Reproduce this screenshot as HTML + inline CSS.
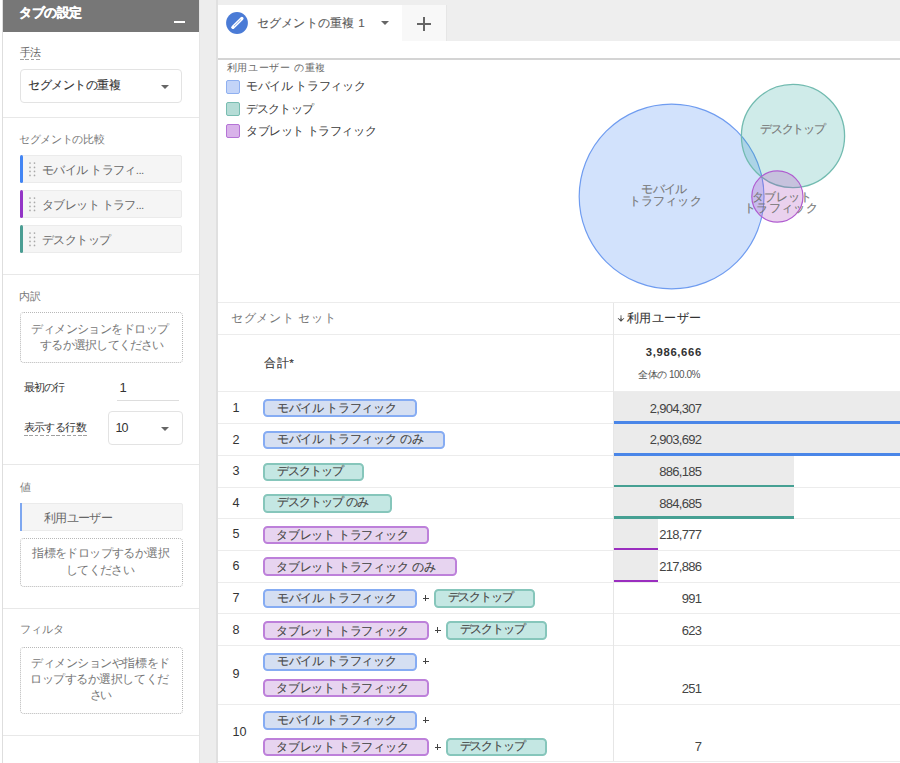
<!DOCTYPE html>
<html lang="ja"><head><meta charset="utf-8"><style>
html,body{margin:0;padding:0;width:900px;height:763px;overflow:hidden;background:#fff}
body{position:relative;font-family:"Liberation Sans",sans-serif}
body>div,body>svg{position:absolute}
.sk{-webkit-text-stroke:0.12px currentColor}
.sk2{-webkit-text-stroke:0.3px currentColor}
</style></head><body>
<div style="left:0px;top:0px;width:199px;height:763px;background:#fff"></div>
<div style="left:2px;top:0px;width:1px;height:763px;background:#dedede"></div>
<div style="left:3px;top:0px;width:196px;height:32px;background:#777"></div>
<div id="t1" class="tx sk2" style="left:19.00px;top:3.25px;font-size:13.00px;line-height:20px;color:#fff;font-weight:bold;letter-spacing:-0.500px;white-space:nowrap;">タブの設定</div>
<div style="left:174px;top:20.5px;width:11px;height:2px;background:#fff"></div>
<div id="t2" class="tx" style="left:20.30px;top:41.85px;font-size:10.80px;line-height:20px;color:#666;font-weight:normal;letter-spacing:-1.280px;white-space:nowrap;">手法</div>
<div style="left:20px;top:58.7px;width:21.5px;height:1.6px;background:repeating-linear-gradient(90deg,#a0a0a0 0 3.6px,transparent 3.6px 5.4px)"></div>
<div style="left:20px;top:69px;width:162px;height:34px;border:1px solid #e3e3e3;border-radius:4px;box-sizing:border-box;background:#fff"></div>
<div id="t3" class="tx sk" style="left:28.30px;top:75.45px;font-size:11.60px;line-height:20px;color:#333;font-weight:normal;letter-spacing:-0.492px;white-space:nowrap;">セグメントの重複</div>
<svg style="left:161px;top:85px" width="8" height="4"><path d="M0 0 L8 0 L4 4 Z" fill="#666"/></svg>
<div style="left:3px;top:117px;width:196px;height:1px;background:#e8e8e8"></div>
<div id="t4" class="tx" style="left:19.10px;top:129.05px;font-size:10.80px;line-height:20px;color:#777;font-weight:normal;letter-spacing:-0.352px;white-space:nowrap;">セグメントの比較</div>
<div style="left:20px;top:155px;width:162px;height:28px;background:#f5f5f5;border:1px solid #ebebeb;box-sizing:border-box;border-radius:2px"></div>
<div style="left:20px;top:155px;width:2.5px;height:28px;background:#4285f4;border-radius:2px"></div>
<svg style="left:26px;top:159px" width="13" height="21"><circle cx="4" cy="4.1" r="0.85" fill="#a9a9a9"/><circle cx="4" cy="8.4" r="0.85" fill="#a9a9a9"/><circle cx="4" cy="12.4" r="0.85" fill="#a9a9a9"/><circle cx="4" cy="16.4" r="0.85" fill="#a9a9a9"/><circle cx="8.5" cy="4.1" r="0.85" fill="#a9a9a9"/><circle cx="8.5" cy="8.4" r="0.85" fill="#a9a9a9"/><circle cx="8.5" cy="12.4" r="0.85" fill="#a9a9a9"/><circle cx="8.5" cy="16.4" r="0.85" fill="#a9a9a9"/></svg>
<div id="t5" class="tx" style="left:41.90px;top:160.40px;font-size:11.60px;line-height:20px;color:#666;font-weight:normal;letter-spacing:-0.585px;white-space:nowrap;">モバイル トラフィ...</div>
<div style="left:20px;top:190px;width:162px;height:28px;background:#f5f5f5;border:1px solid #ebebeb;box-sizing:border-box;border-radius:2px"></div>
<div style="left:20px;top:190px;width:2.5px;height:28px;background:#9334c6;border-radius:2px"></div>
<svg style="left:26px;top:194px" width="13" height="21"><circle cx="4" cy="4.1" r="0.85" fill="#a9a9a9"/><circle cx="4" cy="8.4" r="0.85" fill="#a9a9a9"/><circle cx="4" cy="12.4" r="0.85" fill="#a9a9a9"/><circle cx="4" cy="16.4" r="0.85" fill="#a9a9a9"/><circle cx="8.5" cy="4.1" r="0.85" fill="#a9a9a9"/><circle cx="8.5" cy="8.4" r="0.85" fill="#a9a9a9"/><circle cx="8.5" cy="12.4" r="0.85" fill="#a9a9a9"/><circle cx="8.5" cy="16.4" r="0.85" fill="#a9a9a9"/></svg>
<div id="t6" class="tx" style="left:41.90px;top:195.35px;font-size:11.60px;line-height:20px;color:#666;font-weight:normal;letter-spacing:-0.585px;white-space:nowrap;">タブレット トラフ...</div>
<div style="left:20px;top:225px;width:162px;height:28px;background:#f5f5f5;border:1px solid #ebebeb;box-sizing:border-box;border-radius:2px"></div>
<div style="left:20px;top:225px;width:2.5px;height:28px;background:#4a9d93;border-radius:2px"></div>
<svg style="left:26px;top:229px" width="13" height="21"><circle cx="4" cy="4.1" r="0.85" fill="#a9a9a9"/><circle cx="4" cy="8.4" r="0.85" fill="#a9a9a9"/><circle cx="4" cy="12.4" r="0.85" fill="#a9a9a9"/><circle cx="4" cy="16.4" r="0.85" fill="#a9a9a9"/><circle cx="8.5" cy="4.1" r="0.85" fill="#a9a9a9"/><circle cx="8.5" cy="8.4" r="0.85" fill="#a9a9a9"/><circle cx="8.5" cy="12.4" r="0.85" fill="#a9a9a9"/><circle cx="8.5" cy="16.4" r="0.85" fill="#a9a9a9"/></svg>
<div id="t7" class="tx" style="left:41.90px;top:229.85px;font-size:11.60px;line-height:20px;color:#666;font-weight:normal;letter-spacing:-0.572px;white-space:nowrap;">デスクトップ</div>
<div style="left:3px;top:273.5px;width:196px;height:1px;background:#e8e8e8"></div>
<div id="t8" class="tx" style="left:19.10px;top:285.95px;font-size:10.80px;line-height:20px;color:#777;font-weight:normal;letter-spacing:-0.260px;white-space:nowrap;">内訳</div>
<div style="left:20px;top:312px;width:163px;height:51px;border:1px dotted #b8b8b8;border-radius:4px;box-sizing:border-box"></div>
<div id="t9" class="tx" style="left:-50.10px;width:300px;text-align:center;top:319.10px;font-size:11.50px;line-height:20px;color:#777;font-weight:normal;letter-spacing:-0.534px;white-space:nowrap;">ディメンションをドロップ</div>
<div id="t10" class="tx" style="left:-48.05px;width:300px;text-align:center;top:335.10px;font-size:11.50px;line-height:20px;color:#777;font-weight:normal;letter-spacing:-0.769px;white-space:nowrap;">するか選択してください</div>
<div id="t11" class="tx" style="left:23.50px;top:377.30px;font-size:10.80px;line-height:20px;color:#333;font-weight:normal;letter-spacing:-0.672px;white-space:nowrap;">最初の行</div>
<div id="t12" class="tx" style="left:119.60px;top:377.95px;font-size:13.00px;line-height:20px;color:#333;font-weight:normal;letter-spacing:0.000px;white-space:nowrap;">1</div>
<div style="left:117px;top:400px;width:62px;height:1px;background:#ddd"></div>
<div id="t13" class="tx" style="left:23.50px;top:417.40px;font-size:10.80px;line-height:20px;color:#333;font-weight:normal;letter-spacing:-0.587px;white-space:nowrap;">表示する行数</div>
<div style="left:23.5px;top:434.6px;width:63.5px;height:1.6px;background:repeating-linear-gradient(90deg,#a0a0a0 0 3.6px,transparent 3.6px 5.4px)"></div>
<div style="left:107.5px;top:410.5px;width:75px;height:34.5px;border:1px solid #e3e3e3;border-radius:4px;box-sizing:border-box"></div>
<div id="t14" class="tx" style="left:115.50px;top:418.00px;font-size:12.50px;line-height:20px;color:#333;font-weight:normal;letter-spacing:-0.900px;white-space:nowrap;">10</div>
<svg style="left:161px;top:427px" width="8" height="4"><path d="M0 0 L8 0 L4 4 Z" fill="#666"/></svg>
<div style="left:3px;top:464px;width:196px;height:1px;background:#e8e8e8"></div>
<div id="t15" class="tx" style="left:20.10px;top:476.85px;font-size:10.80px;line-height:20px;color:#777;font-weight:normal;letter-spacing:0.000px;white-space:nowrap;">値</div>
<div style="left:20px;top:503px;width:163px;height:28px;background:#f5f5f5;border:1px solid #ebebeb;box-sizing:border-box;border-radius:2px"></div>
<div style="left:20px;top:503px;width:1.5px;height:28px;background:#7ea7f0"></div>
<div id="t16" class="tx" style="left:43.90px;top:507.60px;font-size:11.50px;line-height:20px;color:#666;font-weight:normal;letter-spacing:-0.637px;white-space:nowrap;">利用ユーザー</div>
<div style="left:20px;top:537.5px;width:163px;height:49.5px;border:1px dotted #b8b8b8;border-radius:4px;box-sizing:border-box"></div>
<div id="t17" class="tx" style="left:-49.45px;width:300px;text-align:center;top:543.15px;font-size:11.50px;line-height:20px;color:#777;font-weight:normal;letter-spacing:-0.592px;white-space:nowrap;">指標をドロップするか選択</div>
<div id="t18" class="tx" style="left:-49.85px;width:300px;text-align:center;top:559.80px;font-size:11.50px;line-height:20px;color:#777;font-weight:normal;letter-spacing:-0.663px;white-space:nowrap;">してください</div>
<div style="left:3px;top:608px;width:196px;height:1px;background:#e8e8e8"></div>
<div id="t19" class="tx" style="left:19.90px;top:618.70px;font-size:10.80px;line-height:20px;color:#777;font-weight:normal;letter-spacing:-0.038px;white-space:nowrap;">フィルタ</div>
<div style="left:20px;top:646.5px;width:163px;height:67px;border:1px dotted #b8b8b8;border-radius:4px;box-sizing:border-box"></div>
<div id="t20" class="tx" style="left:-49.60px;width:300px;text-align:center;top:652.80px;font-size:11.50px;line-height:20px;color:#777;font-weight:normal;letter-spacing:-0.455px;white-space:nowrap;">ディメンションや指標をド</div>
<div id="t21" class="tx" style="left:-50.60px;width:300px;text-align:center;top:668.90px;font-size:11.50px;line-height:20px;color:#777;font-weight:normal;letter-spacing:-0.455px;white-space:nowrap;">ロップするか選択してくだ</div>
<div id="t22" class="tx" style="left:-49.95px;width:300px;text-align:center;top:685.10px;font-size:11.50px;line-height:20px;color:#777;font-weight:normal;letter-spacing:-1.880px;white-space:nowrap;">さい</div>
<div style="left:3px;top:734.5px;width:196px;height:1px;background:#e8e8e8"></div>
<div style="left:199px;top:0px;width:17px;height:763px;background:#ededed"></div>
<div style="left:199px;top:0px;width:1px;height:763px;background:#e5e5e5"></div>
<div style="left:216px;top:0px;width:2px;height:763px;background:#e0e0e0"></div>
<div style="left:218px;top:0px;width:682px;height:763px;background:#fff"></div>
<div style="left:218px;top:0px;width:682px;height:41px;background:#eeeeee"></div>
<div style="left:218px;top:5px;width:184px;height:36px;background:#fff"></div>
<div style="left:402px;top:5px;width:44px;height:36px;background:#f8f8f8"></div>
<div style="left:446px;top:5px;width:1px;height:36px;background:#e6e6e6"></div>
<svg style="left:226px;top:11.5px" width="22" height="22"><circle cx="11" cy="11" r="10.9" fill="#4a7bd6"/><path d="M7 15.2 L15.9 6.5" stroke="#fff" stroke-width="3.3" stroke-linecap="round"/><path d="M8 14.2 L14.8 7.6" stroke="#7fa3e8" stroke-width="0.9"/><path d="M5.8 16.4 L7 15.2" stroke="#fff" stroke-width="2"/></svg>
<div id="t23" class="tx sk" style="left:256.50px;top:12.50px;font-size:11.60px;line-height:20px;color:#5a5a5a;font-weight:normal;letter-spacing:0.279px;white-space:nowrap;">セグメントの重複 1</div>
<svg style="left:381px;top:21px" width="8" height="4"><path d="M0 0 L8 0 L4 4 Z" fill="#666"/></svg>
<div style="left:417px;top:23.25px;width:14px;height:1.5px;background:#666"></div>
<div style="left:423.25px;top:17px;width:1.5px;height:14px;background:#666"></div>
<div style="left:218px;top:58px;width:682px;height:2px;background:#d4d4d4"></div>
<div id="t24" class="tx" style="left:226.80px;top:58.00px;font-size:10.20px;line-height:20px;color:#666;font-weight:normal;letter-spacing:0.641px;white-space:nowrap;">利用ユーザー の重複</div>
<div style="left:226px;top:80px;width:14px;height:14px;background:#c3d4f8;border:1.5px solid #8fb0f0;border-radius:2px;box-sizing:border-box"></div>
<div id="t25" class="tx" style="left:246.00px;top:76.00px;font-size:12.00px;line-height:20px;color:#3a3a3a;font-weight:normal;letter-spacing:-0.369px;white-space:nowrap;">モバイル トラフィック</div>
<div style="left:226px;top:102px;width:14px;height:14px;background:#b5dcd6;border:1.5px solid #79bdb1;border-radius:2px;box-sizing:border-box"></div>
<div id="t26" class="tx" style="left:246.00px;top:98.50px;font-size:12.00px;line-height:20px;color:#3a3a3a;font-weight:normal;letter-spacing:-0.865px;white-space:nowrap;">デスクトップ</div>
<div style="left:226px;top:124px;width:14px;height:14px;background:#d9b3ea;border:1.5px solid #b574d6;border-radius:2px;box-sizing:border-box"></div>
<div id="t27" class="tx" style="left:246.00px;top:120.50px;font-size:12.00px;line-height:20px;color:#3a3a3a;font-weight:normal;letter-spacing:-0.430px;white-space:nowrap;">タブレット トラフィック</div>
<svg style="left:0;top:0" width="900" height="763">
<circle cx="671.6" cy="196.5" r="92.4" fill="#4285f4" fill-opacity="0.24" stroke="#6f9cf0" stroke-width="1.2"/>
<circle cx="793" cy="136" r="51.6" fill="#26a69a" fill-opacity="0.22" stroke="#72bbb0" stroke-width="1.3"/>
<circle cx="777.4" cy="196.5" r="25.6" fill="#ab47bc" fill-opacity="0.25" stroke="#b05cd0" stroke-width="1.2"/>
</svg>
<div id="t28" class="tx sk" style="left:514.00px;width:300px;text-align:center;top:183.45px;font-size:12.00px;line-height:12px;color:#777;font-weight:normal;letter-spacing:-0.534px;white-space:nowrap;">モバイル</div>
<div id="t29" class="tx sk" style="left:515.20px;width:300px;text-align:center;top:194.90px;font-size:12.00px;line-height:12px;color:#777;font-weight:normal;letter-spacing:0.181px;white-space:nowrap;">トラフィック</div>
<div id="t30" class="tx sk" style="left:642.50px;width:300px;text-align:center;top:123.00px;font-size:12.00px;line-height:12px;color:#777;font-weight:normal;letter-spacing:-1.163px;white-space:nowrap;">デスクトップ</div>
<div id="t31" class="tx sk" style="left:631.90px;width:300px;text-align:center;top:190.90px;font-size:12.00px;line-height:12px;color:#777;font-weight:normal;letter-spacing:-0.160px;white-space:nowrap;">タブレット</div>
<div id="t32" class="tx sk" style="left:631.00px;width:300px;text-align:center;top:202.10px;font-size:12.00px;line-height:12px;color:#777;font-weight:normal;letter-spacing:0.274px;white-space:nowrap;">トラフィック</div>
<div style="left:218px;top:302.2px;width:682px;height:1px;background:#ececec"></div>
<div style="left:218px;top:333.9px;width:682px;height:1px;background:#ececec"></div>
<div style="left:218px;top:391.2px;width:682px;height:1px;background:#ececec"></div>
<div style="left:218px;top:423.1px;width:682px;height:1px;background:#ececec"></div>
<div style="left:218px;top:455px;width:682px;height:1px;background:#ececec"></div>
<div style="left:218px;top:486.8px;width:682px;height:1px;background:#ececec"></div>
<div style="left:218px;top:518.3px;width:682px;height:1px;background:#ececec"></div>
<div style="left:218px;top:549.7px;width:682px;height:1px;background:#ececec"></div>
<div style="left:218px;top:581.6px;width:682px;height:1px;background:#ececec"></div>
<div style="left:218px;top:613.4px;width:682px;height:1px;background:#ececec"></div>
<div style="left:218px;top:645.2px;width:682px;height:1px;background:#ececec"></div>
<div style="left:218px;top:704px;width:682px;height:1px;background:#ececec"></div>
<div style="left:218px;top:760.5px;width:682px;height:1px;background:#ececec"></div>
<div style="left:612.5px;top:303px;width:1px;height:458px;background:#e6e6e6"></div>
<div id="t33" class="tx" style="left:231.10px;top:307.50px;font-size:11.60px;line-height:20px;color:#777;font-weight:normal;letter-spacing:0.661px;white-space:nowrap;">セグメント セット</div>
<svg style="left:617px;top:314.5px" width="8" height="8"><path d="M4 0.3 V4.5" stroke="#888" stroke-width="1.3"/><path d="M0.6 3.2 L4 6.8 L7.4 3.2 L6.4 3.2 L4 5.4 L1.6 3.2 Z" fill="#333"/><path d="M4 3.5 V6" stroke="#444" stroke-width="1.3"/></svg>
<div id="t34" class="tx sk" style="left:627.10px;top:308.40px;font-size:11.60px;line-height:20px;color:#333;font-weight:normal;letter-spacing:0.396px;white-space:nowrap;">利用ユーザー</div>
<div id="t35" class="tx sk" style="left:264.10px;top:352.55px;font-size:11.80px;line-height:20px;color:#333;font-weight:normal;letter-spacing:0.544px;white-space:nowrap;">合計*</div>
<div id="t36" class="tx" style="right:198.10px;text-align:right;top:342.00px;font-size:11.30px;line-height:20px;color:#333;font-weight:bold;letter-spacing:0.645px;white-space:nowrap;">3,986,666</div>
<div id="t37" class="tx" style="right:200.10px;text-align:right;top:364.50px;font-size:10.00px;line-height:20px;color:#555;font-weight:normal;letter-spacing:-0.500px;white-space:nowrap;">全体の 100.0%</div>
<div style="left:614px;top:392.2px;width:286px;height:30.900000000000034px;background:#ebebeb"></div>
<div style="left:614px;top:421.1px;width:286px;height:2.5px;background:#4a86e8"></div>
<div id="rn0" class="tx" style="left:232.50px;top:397.60px;font-size:12.60px;line-height:20px;color:#333;font-weight:normal;letter-spacing:0.000px;white-space:nowrap;">1</div>
<div style="left:263px;top:398.9px;width:154px;height:18.5px;background:#d5dff2;border:2px solid #86acf3;border-radius:4.5px;box-sizing:border-box"></div>
<div id="pm_0_0_263" class="tx sk" style="left:277.00px;top:397.55px;font-size:11.60px;line-height:20px;color:#444;font-weight:normal;letter-spacing:-0.371px;white-space:nowrap;">モバイル トラフィック</div>
<div id="val0" class="tx" style="right:198.80px;text-align:right;top:398.55px;font-size:13.00px;line-height:20px;color:#444;font-weight:normal;letter-spacing:-0.709px;white-space:nowrap;">2,904,307</div>
<div style="left:614px;top:424.1px;width:286px;height:30.899999999999977px;background:#ebebeb"></div>
<div style="left:614px;top:453px;width:286px;height:2.5px;background:#4a86e8"></div>
<div id="rn1" class="tx" style="left:232.50px;top:429.50px;font-size:12.60px;line-height:20px;color:#333;font-weight:normal;letter-spacing:0.000px;white-space:nowrap;">2</div>
<div style="left:263px;top:430.8px;width:182px;height:18.5px;background:#d5dff2;border:2px solid #86acf3;border-radius:4.5px;box-sizing:border-box"></div>
<div id="pm2_1_0_263" class="tx sk" style="left:277.00px;top:429.45px;font-size:11.60px;line-height:20px;color:#444;font-weight:normal;letter-spacing:-0.371px;white-space:nowrap;">モバイル トラフィック<span style="margin-left:4px">のみ</span></div>
<div id="val1" class="tx" style="right:198.80px;text-align:right;top:430.45px;font-size:13.00px;line-height:20px;color:#444;font-weight:normal;letter-spacing:-0.709px;white-space:nowrap;">2,903,692</div>
<div style="left:614px;top:456px;width:180px;height:30.80000000000001px;background:#ebebeb"></div>
<div style="left:614px;top:484.8px;width:180px;height:2.5px;background:#46a093"></div>
<div id="rn2" class="tx" style="left:232.50px;top:461.35px;font-size:12.60px;line-height:20px;color:#333;font-weight:normal;letter-spacing:0.000px;white-space:nowrap;">3</div>
<div style="left:263px;top:462.65px;width:101px;height:18.5px;background:#c4e7e3;border:2px solid #86c6bb;border-radius:4.5px;box-sizing:border-box"></div>
<div id="pd_2_0_263" class="tx sk" style="left:277.00px;top:460.65px;font-size:11.60px;line-height:20px;color:#444;font-weight:normal;letter-spacing:-1.100px;white-space:nowrap;">デスクトップ</div>
<div id="val2" class="tx" style="right:198.80px;text-align:right;top:462.30px;font-size:13.00px;line-height:20px;color:#444;font-weight:normal;letter-spacing:-0.709px;white-space:nowrap;">886,185</div>
<div style="left:614px;top:487.8px;width:180px;height:30.499999999999943px;background:#ebebeb"></div>
<div style="left:614px;top:516.3px;width:180px;height:2.5px;background:#46a093"></div>
<div id="rn3" class="tx" style="left:232.50px;top:493.00px;font-size:12.60px;line-height:20px;color:#333;font-weight:normal;letter-spacing:0.000px;white-space:nowrap;">4</div>
<div style="left:263px;top:494.29999999999995px;width:129px;height:18.5px;background:#c4e7e3;border:2px solid #86c6bb;border-radius:4.5px;box-sizing:border-box"></div>
<div id="pd2_3_0_263" class="tx sk" style="left:277.00px;top:492.30px;font-size:11.60px;line-height:20px;color:#444;font-weight:normal;letter-spacing:-1.100px;white-space:nowrap;">デスクトップ<span style="margin-left:4px">のみ</span></div>
<div id="val3" class="tx" style="right:198.80px;text-align:right;top:493.95px;font-size:13.00px;line-height:20px;color:#444;font-weight:normal;letter-spacing:-0.709px;white-space:nowrap;">884,685</div>
<div style="left:614px;top:519.3px;width:44px;height:30.40000000000009px;background:#ebebeb"></div>
<div style="left:614px;top:547.7px;width:44px;height:2.5px;background:#9a2ebf"></div>
<div id="rn4" class="tx" style="left:232.50px;top:524.45px;font-size:12.60px;line-height:20px;color:#333;font-weight:normal;letter-spacing:0.000px;white-space:nowrap;">5</div>
<div style="left:263px;top:525.75px;width:166px;height:18.5px;background:#e7d4f0;border:2px solid #bd80da;border-radius:4.5px;box-sizing:border-box"></div>
<div id="pt_4_0_263" class="tx sk" style="left:276.00px;top:525.25px;font-size:11.60px;line-height:20px;color:#444;font-weight:normal;letter-spacing:-0.237px;white-space:nowrap;">タブレット トラフィック</div>
<div id="val4" class="tx" style="right:198.80px;text-align:right;top:525.40px;font-size:13.00px;line-height:20px;color:#444;font-weight:normal;letter-spacing:-0.709px;white-space:nowrap;">218,777</div>
<div style="left:614px;top:550.7px;width:44px;height:30.899999999999977px;background:#ebebeb"></div>
<div style="left:614px;top:579.6px;width:44px;height:2.5px;background:#9a2ebf"></div>
<div id="rn5" class="tx" style="left:232.50px;top:556.10px;font-size:12.60px;line-height:20px;color:#333;font-weight:normal;letter-spacing:0.000px;white-space:nowrap;">6</div>
<div style="left:263px;top:557.4000000000001px;width:194px;height:18.5px;background:#e7d4f0;border:2px solid #bd80da;border-radius:4.5px;box-sizing:border-box"></div>
<div id="pt2_5_0_263" class="tx sk" style="left:276.00px;top:556.90px;font-size:11.60px;line-height:20px;color:#444;font-weight:normal;letter-spacing:-0.237px;white-space:nowrap;">タブレット トラフィック<span style="margin-left:4px">のみ</span></div>
<div id="val5" class="tx" style="right:198.80px;text-align:right;top:557.05px;font-size:13.00px;line-height:20px;color:#444;font-weight:normal;letter-spacing:-0.709px;white-space:nowrap;">217,886</div>
<div id="rn6" class="tx" style="left:232.50px;top:587.95px;font-size:12.60px;line-height:20px;color:#333;font-weight:normal;letter-spacing:0.000px;white-space:nowrap;">7</div>
<div style="left:263px;top:589.25px;width:154px;height:18.5px;background:#d5dff2;border:2px solid #86acf3;border-radius:4.5px;box-sizing:border-box"></div>
<div id="pm_6_0_263" class="tx sk" style="left:277.00px;top:587.90px;font-size:11.60px;line-height:20px;color:#444;font-weight:normal;letter-spacing:-0.371px;white-space:nowrap;">モバイル トラフィック</div>
<div style="left:422.5px;top:597.9px;width:6px;height:1.2px;background:#444"></div>
<div style="left:424.9px;top:595.4px;width:1.2px;height:6px;background:#444"></div>
<div style="left:433.5px;top:589.25px;width:101px;height:18.5px;background:#c4e7e3;border:2px solid #86c6bb;border-radius:4.5px;box-sizing:border-box"></div>
<div id="pd_6_0_433" class="tx sk" style="left:447.50px;top:587.25px;font-size:11.60px;line-height:20px;color:#444;font-weight:normal;letter-spacing:-1.100px;white-space:nowrap;">デスクトップ</div>
<div id="val6" class="tx" style="right:198.80px;text-align:right;top:588.90px;font-size:13.00px;line-height:20px;color:#444;font-weight:normal;letter-spacing:-0.709px;white-space:nowrap;">991</div>
<div id="rn7" class="tx" style="left:232.50px;top:619.75px;font-size:12.60px;line-height:20px;color:#333;font-weight:normal;letter-spacing:0.000px;white-space:nowrap;">8</div>
<div style="left:263px;top:621.05px;width:166px;height:18.5px;background:#e7d4f0;border:2px solid #bd80da;border-radius:4.5px;box-sizing:border-box"></div>
<div id="pt_7_0_263" class="tx sk" style="left:276.00px;top:620.55px;font-size:11.60px;line-height:20px;color:#444;font-weight:normal;letter-spacing:-0.237px;white-space:nowrap;">タブレット トラフィック</div>
<div style="left:434.5px;top:629.9px;width:6px;height:1.2px;background:#444"></div>
<div style="left:436.9px;top:627.4px;width:1.2px;height:6px;background:#444"></div>
<div style="left:445.5px;top:621.05px;width:101px;height:18.5px;background:#c4e7e3;border:2px solid #86c6bb;border-radius:4.5px;box-sizing:border-box"></div>
<div id="pd_7_0_445" class="tx sk" style="left:459.50px;top:619.05px;font-size:11.60px;line-height:20px;color:#444;font-weight:normal;letter-spacing:-1.100px;white-space:nowrap;">デスクトップ</div>
<div id="val7" class="tx" style="right:198.80px;text-align:right;top:620.70px;font-size:13.00px;line-height:20px;color:#444;font-weight:normal;letter-spacing:-0.709px;white-space:nowrap;">623</div>
<div id="rn8" class="tx" style="left:232.50px;top:664.05px;font-size:12.60px;line-height:20px;color:#333;font-weight:normal;letter-spacing:0.000px;white-space:nowrap;">9</div>
<div style="left:263px;top:652.6500000000001px;width:154px;height:18.5px;background:#d5dff2;border:2px solid #86acf3;border-radius:4.5px;box-sizing:border-box"></div>
<div id="pm_8_0_263" class="tx sk" style="left:277.00px;top:651.30px;font-size:11.60px;line-height:20px;color:#444;font-weight:normal;letter-spacing:-0.371px;white-space:nowrap;">モバイル トラフィック</div>
<div style="left:422.5px;top:660.9px;width:6px;height:1.2px;background:#444"></div>
<div style="left:424.9px;top:658.4px;width:1.2px;height:6px;background:#444"></div>
<div style="left:263px;top:678.95px;width:166px;height:18.5px;background:#e7d4f0;border:2px solid #bd80da;border-radius:4.5px;box-sizing:border-box"></div>
<div id="pt_8_1_263" class="tx sk" style="left:276.00px;top:678.45px;font-size:11.60px;line-height:20px;color:#444;font-weight:normal;letter-spacing:-0.237px;white-space:nowrap;">タブレット トラフィック</div>
<div id="val8" class="tx" style="right:198.80px;text-align:right;top:678.60px;font-size:13.00px;line-height:20px;color:#444;font-weight:normal;letter-spacing:-0.709px;white-space:nowrap;">251</div>
<div id="rn9" class="tx" style="left:232.50px;top:721.70px;font-size:12.60px;line-height:20px;color:#333;font-weight:normal;letter-spacing:0.000px;white-space:nowrap;">10</div>
<div style="left:263px;top:711.45px;width:154px;height:18.5px;background:#d5dff2;border:2px solid #86acf3;border-radius:4.5px;box-sizing:border-box"></div>
<div id="pm_9_0_263" class="tx sk" style="left:277.00px;top:710.10px;font-size:11.60px;line-height:20px;color:#444;font-weight:normal;letter-spacing:-0.371px;white-space:nowrap;">モバイル トラフィック</div>
<div style="left:422.5px;top:719.9px;width:6px;height:1.2px;background:#444"></div>
<div style="left:424.9px;top:717.4px;width:1.2px;height:6px;background:#444"></div>
<div style="left:263px;top:737.75px;width:166px;height:18.5px;background:#e7d4f0;border:2px solid #bd80da;border-radius:4.5px;box-sizing:border-box"></div>
<div id="pt_9_1_263" class="tx sk" style="left:276.00px;top:737.25px;font-size:11.60px;line-height:20px;color:#444;font-weight:normal;letter-spacing:-0.237px;white-space:nowrap;">タブレット トラフィック</div>
<div style="left:434.5px;top:746.9px;width:6px;height:1.2px;background:#444"></div>
<div style="left:436.9px;top:744.4px;width:1.2px;height:6px;background:#444"></div>
<div style="left:445.5px;top:737.75px;width:101px;height:18.5px;background:#c4e7e3;border:2px solid #86c6bb;border-radius:4.5px;box-sizing:border-box"></div>
<div id="pd_9_1_445" class="tx sk" style="left:459.50px;top:735.75px;font-size:11.60px;line-height:20px;color:#444;font-weight:normal;letter-spacing:-1.100px;white-space:nowrap;">デスクトップ</div>
<div id="val9" class="tx" style="right:198.80px;text-align:right;top:737.40px;font-size:13.00px;line-height:20px;color:#444;font-weight:normal;letter-spacing:-0.709px;white-space:nowrap;">7</div>
</body></html>
